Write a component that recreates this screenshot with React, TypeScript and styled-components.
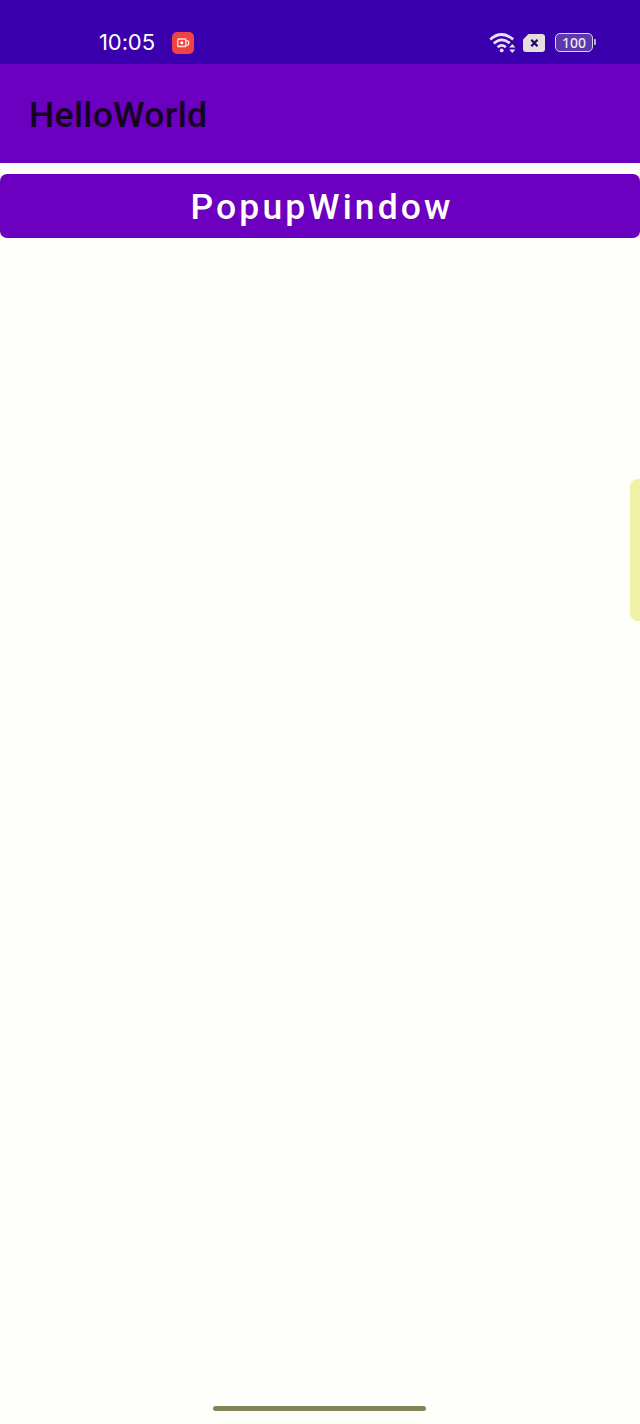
import React from "react";
import styled, { createGlobalStyle } from "styled-components";

const GlobalStyle = createGlobalStyle`
  * { box-sizing: border-box; }
  body { margin: 0; background: #fefefa; font-family: Roboto, sans-serif; }
`;

const Screen = styled.div`
  position: relative;
  display: flex;
  flex-direction: column;
  width: 640px;
  height: 1424px;
  overflow: hidden;
  background: #fefefa;
`;

const StatusBar = styled.header`
  display: flex;
  align-items: center;
  justify-content: space-between;
  height: 64px;
  padding: 21px 45px 0 99px;
  background: #3a00ae;
`;

const StatusGroup = styled.div<{ $gap: number }>`
  display: flex;
  align-items: center;
  gap: ${(p) => p.$gap}px;
`;

const Clock = styled.time`
  width: 57px;
  padding-bottom: 1px;
  font: 400 22px/22px Inter, sans-serif;
  letter-spacing: -0.1px;
  white-space: nowrap;
  color: #fff;
`;

const RecorderBadge = styled.span`
  display: flex;
  align-items: center;
  justify-content: center;
  width: 22px;
  height: 22px;
  border-radius: 5px;
  background: #f04444;
`;

const Battery = styled.div`
  position: relative;
  display: flex;
  align-items: center;
  justify-content: center;
  width: 38px;
  height: 19px;
  margin: 0 2px 0 3px;
  border: 1.5px solid #dcd6ea;
  border-radius: 5px;
  background: #5a38ae;
  color: #eee8f4;
  font: 500 14px/16px "Noto Sans", sans-serif;

  &::after {
    content: "";
    position: absolute;
    right: -4px;
    top: 5px;
    width: 2px;
    height: 6px;
    border-radius: 0 1px 1px 0;
    background: #b9add6;
  }
`;

const AppBar = styled.div`
  display: flex;
  align-items: center;
  height: 99px;
  padding: 3px 29px 0;
  background: #6c00c0;
`;

const Title = styled.h1`
  margin: 0;
  font-size: 35.5px;
  font-weight: 500;
  line-height: 42px;
  letter-spacing: 0.35px;
  color: #14041f;
`;

const Content = styled.main`
  flex: 1;
  padding-top: 11px;
`;

const PopupButton = styled.button`
  display: block;
  width: 100%;
  height: 64px;
  padding: 1px 0 0 4px;
  border: 0;
  border-radius: 7px;
  background: #6c00c0;
  color: #fffdfa;
  font: 500 35.5px/42px Roboto, sans-serif;
  letter-spacing: 3.1px;
`;

const EdgeHandle = styled.div`
  position: absolute;
  top: 479px;
  right: 0;
  width: 10px;
  height: 142px;
  border-radius: 8px 0 0 8px;
  background: #f0f0a6;
`;

const HomeIndicator = styled.div`
  align-self: center;
  width: 213px;
  height: 5px;
  margin: 0 1px 13px 0;
  border-radius: 3px;
  background: #84845a;
`;

function WifiIcon() {
  return (
    <svg width="28" height="22" viewBox="0 0 28 22" fill="none" stroke="#e8e2f0" strokeWidth="2.7">
      <path d="M2.2 7.4Q13.5-2.4 25.2 7.4M5.8 11.5Q13.6 4.6 21.7 11.2M9.7 15.2Q13.7 11.6 17.8 15.2" />
      <circle cx="13.7" cy="18.4" r="1.9" fill="#e8e2f0" stroke="none" />
      <path d="m21.2 15.6 3.1-3.5 3.1 3.5ZM21.2 17.6h6.2l-3.1 3.4Z" fill="#e8e2f0" stroke="none" />
    </svg>
  );
}

function NoSimIcon() {
  return (
    <svg width="22" height="18" viewBox="0 0 22 18">
      <path d="M5.5 0H19q3 0 3 3v12q0 3-3 3H3q-3 0-3-3V5.5Z" fill="#e4dfdc" />
      <path d="m8.3 5.8 6.2 6.4m0-6.4-6.2 6.4" stroke="#250071" strokeWidth="2.2" />
    </svg>
  );
}

function RecorderIcon() {
  return (
    <svg width="14" height="10" viewBox="0 0 14 10" fill="none" stroke="#ffe1d6" strokeWidth="1.3">
      <rect x="1.8" y="1" width="8" height="7.5" rx="0.6" />
      <path d="M9.8 2.8h2l.8.8v2.8l-.8.8h-2" />
      <circle cx="5.8" cy="4.8" r="1.5" fill="#fff" stroke="none" />
    </svg>
  );
}

export default function App() {
  return (
    <Screen>
      <GlobalStyle />
      <StatusBar>
        <StatusGroup $gap={16}>
          <Clock>10:05</Clock>
          <RecorderBadge><RecorderIcon /></RecorderBadge>
        </StatusGroup>
        <StatusGroup $gap={7}>
          <WifiIcon />
          <NoSimIcon />
          <Battery>100</Battery>
        </StatusGroup>
      </StatusBar>
      <AppBar><Title>HelloWorld</Title></AppBar>
      <Content><PopupButton>PopupWindow</PopupButton></Content>
      <EdgeHandle />
      <HomeIndicator />
    </Screen>
  );
}
